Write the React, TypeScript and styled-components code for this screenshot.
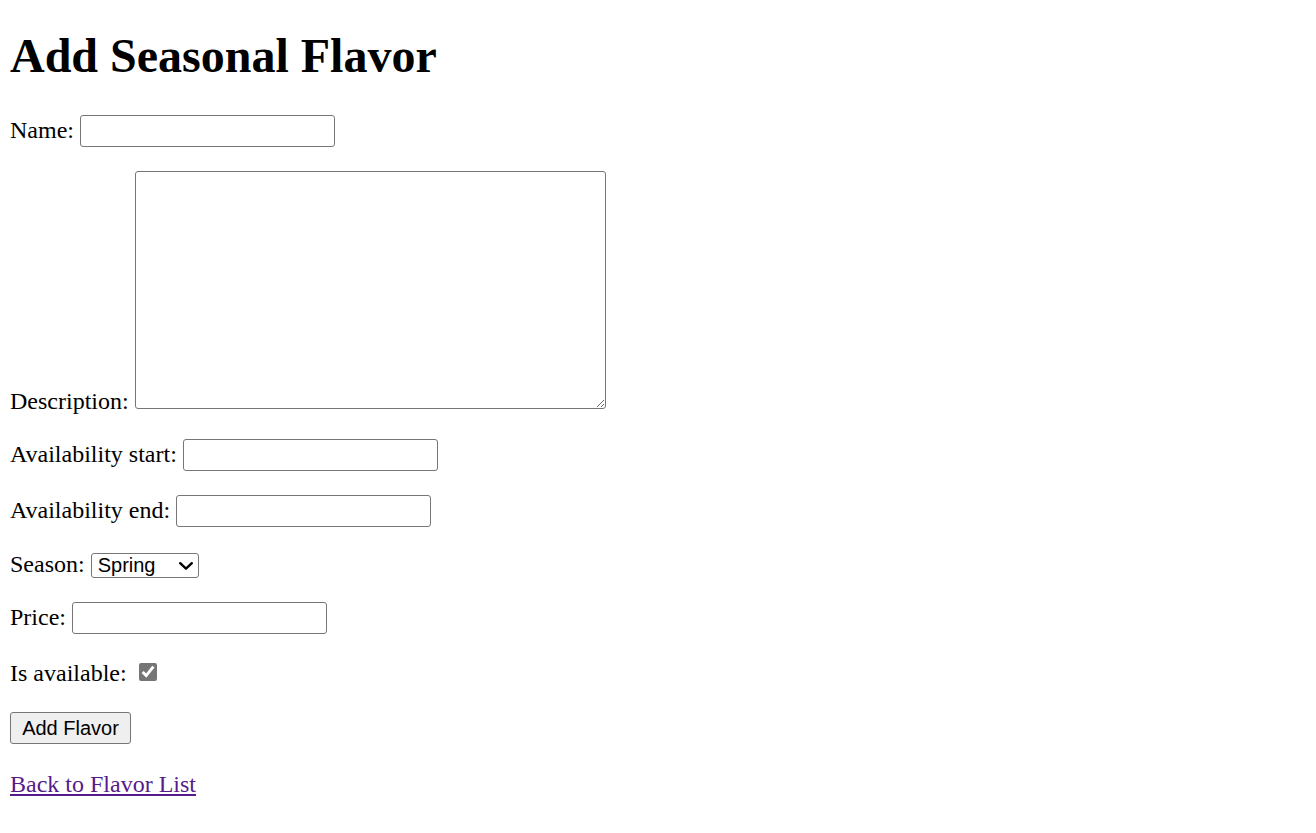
import React from "react";
import styled, { createGlobalStyle } from "styled-components";

const Global = createGlobalStyle`
  html, body { margin: 0; padding: 0; background: #ffffff; }
  body {
    font-family: "Liberation Serif", "Times New Roman", serif;
    font-size: 24px;
    color: #000000;
  }
`;

const Page = styled.div`
  padding: 1px 10px 20px 10px;
`;

const Title = styled.h1`
  font-size: 48px;
  font-weight: bold;
  margin: 27px 0 32px 0;
  line-height: normal;
`;

const Form = styled.form`
  margin: 0;
`;

const Row = styled.p<{ $padBottom?: number }>`
  margin: 24px 0;
  line-height: normal;
  padding-bottom: ${(p) => p.$padBottom ?? 0}px;
`;

const Label = styled.label``;

const TextInput = styled.input`
  box-sizing: border-box;
  width: 255px;
  height: 32px;
  border: 1px solid #767676;
  border-radius: 3px;
  padding: 0 3px;
  font-family: "Liberation Sans", Arial, sans-serif;
  font-size: 20px;
  background: #ffffff;
  outline: none;
  margin: 0;
`;

const TextArea = styled.textarea`
  box-sizing: border-box;
  width: 471px;
  height: 238px;
  border: 1px solid #767676;
  border-radius: 3px;
  padding: 3px;
  font-family: "Liberation Mono", monospace;
  font-size: 20px;
  background: #ffffff;
  outline: none;
  margin: 0;
`;

const SelectWrap = styled.span`
  position: relative;
  display: inline-block;
`;

const Select = styled.select`
  appearance: none;
  -webkit-appearance: none;
  box-sizing: border-box;
  width: 108px;
  height: 25px;
  border: 1px solid #767676;
  border-radius: 3px;
  padding: 0 24px 0 6px;
  font-family: "Liberation Sans", Arial, sans-serif;
  font-size: 20px;
  line-height: 23px;
  background: #ffffff;
  color: #000000;
  margin: 0;
  outline: none;
`;

const Chevron = styled.svg`
  position: absolute;
  right: 6px;
  top: 50%;
  width: 14px;
  height: 8px;
  margin-top: -3px;
  pointer-events: none;
`;

const Check = styled.input`
  width: 18px;
  height: 18px;
  margin: 5px 3px 0 6px;
  vertical-align: baseline;
  accent-color: #767676;
`;

const Button = styled.button`
  box-sizing: border-box;
  width: 121px;
  height: 32px;
  border: 1px solid #767676;
  border-radius: 3px;
  background: #efefef;
  padding: 0 10px;
  font-family: "Liberation Sans", Arial, sans-serif;
  font-size: 20px;
  color: #000000;
  margin: 0;
`;

const BackLink = styled.a`
  color: #551a8b;
  text-decoration: underline;
`;

export default function App() {
  return (
    <>
      <Global />
      <Page>
        <Title>Add Seasonal Flavor</Title>
        <Form onSubmit={(e) => e.preventDefault()}>
          <Row>
            <Label htmlFor="id_name">Name:</Label> <TextInput type="text" id="id_name" />
          </Row>
          <Row>
            <Label htmlFor="id_description">Description:</Label> <TextArea id="id_description" />
          </Row>
          <Row>
            <Label htmlFor="id_start">Availability start:</Label> <TextInput type="text" id="id_start" />
          </Row>
          <Row>
            <Label htmlFor="id_end">Availability end:</Label> <TextInput type="text" id="id_end" />
          </Row>
          <Row>
            <Label htmlFor="id_season">Season:</Label>{" "}
            <SelectWrap>
              <Select id="id_season" defaultValue="Spring">
                <option>Spring</option>
                <option>Summer</option>
                <option>Autumn</option>
                <option>Winter</option>
              </Select>
              <Chevron viewBox="0 0 14 8">
                <path d="M1.2 1.2 L7 6.6 L12.8 1.2" fill="none" stroke="#000" strokeWidth="2.4" strokeLinecap="round" strokeLinejoin="round" />
              </Chevron>
            </SelectWrap>
          </Row>
          <Row>
            <Label htmlFor="id_price">Price:</Label> <TextInput type="text" id="id_price" />
          </Row>
          <Row $padBottom={1}>
            <Label htmlFor="id_avail">Is available:</Label> <Check type="checkbox" id="id_avail" defaultChecked />
          </Row>
          <Row $padBottom={3}>
            <Button type="submit">Add Flavor</Button>
          </Row>
        </Form>
        <Row>
          <BackLink href="#">Back to Flavor List</BackLink>
        </Row>
      </Page>
    </>
  );
}
